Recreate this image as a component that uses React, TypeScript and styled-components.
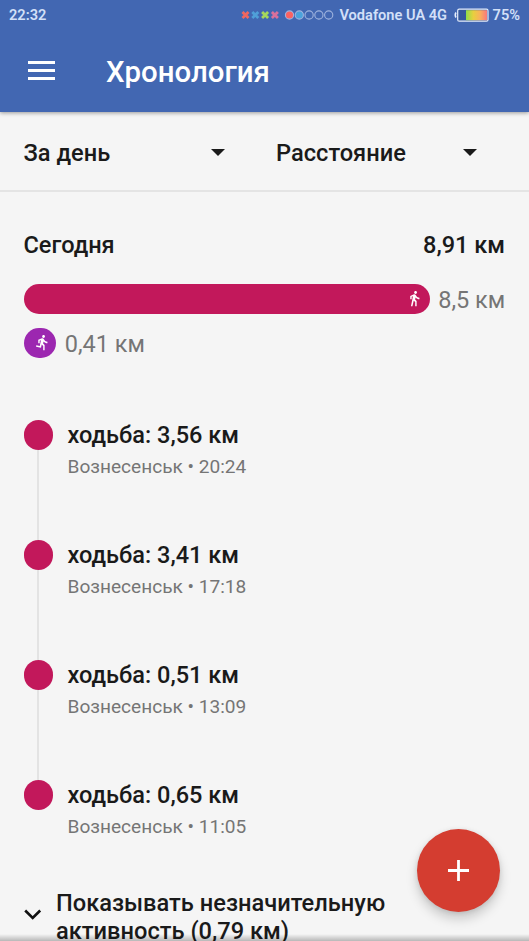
import React from "react";
import styled, { createGlobalStyle } from "styled-components";

const GlobalStyle = createGlobalStyle`
  * { box-sizing: border-box; }
  html, body { margin: 0; padding: 0; height: 100%; overflow: hidden; }
  body { background: #f5f5f5; font-family: Roboto, "Noto Sans", sans-serif; color: #1a1a1a; }
`;

const Screen = styled.div`
  position: relative;
  width: 529px;
  height: 941px;
  overflow: hidden;
  background: #f5f5f5;
`;

const Header = styled.header`
  height: 112px;
  background: #4267b2;
  box-shadow: 0 1px 4px rgba(0, 0, 0, 0.38);
`;

const StatusBar = styled.div`
  display: flex;
  align-items: center;
  height: 30px;
  padding: 0 9px;
  font-size: 14.6px;
  font-weight: 600;
  line-height: 30px;
  color: #d3e0f8;
  white-space: nowrap;
`;

const StatusRight = styled.div`
  display: flex;
  align-items: center;
  margin-left: auto;
`;

const Signals = styled.svg`
  display: block;
  margin-right: 5.5px;
`;

const Battery = styled.svg`
  display: block;
  margin: 0 4px 0 6.5px;
`;

const Toolbar = styled.div`
  display: flex;
  align-items: center;
  height: 82px;
  padding-left: 28px;
`;

const MenuButton = styled.button`
  display: flex;
  flex-direction: column;
  gap: 5px;
  width: 27px;
  margin: -1px 51px 0 0;
  padding: 0;
  border: 0;
  background: none;
`;

const MenuLine = styled.span`
  height: 3px;
  background: #fff;
`;

const Title = styled.h1`
  margin: 1px 0 0;
  font-size: 29.4px;
  font-weight: 500;
  line-height: 40px;
  color: #fff;
`;

const Filters = styled.div`
  display: grid;
  grid-template-columns: 252.5px 1fr;
  height: 80px;
  padding: 0 24px 0 23.5px;
  border-bottom: 2px solid #e4e4e4;
`;

const Filter = styled.div<{ $gap: string }>`
  display: flex;
  align-items: center;
  justify-content: space-between;
  padding: 3px ${(p) => p.$gap} 0 0;
  font-size: 23.65px;
  font-weight: 500;
`;

const SummaryHead = styled.div`
  display: flex;
  justify-content: space-between;
  margin-top: 38px;
  padding: 0 24px 0 23.5px;
  font-size: 23.55px;
  font-weight: 500;
  line-height: 30px;
`;

const Bars = styled.div`
  display: flex;
  flex-direction: column;
  gap: 14px;
  padding: 24px 0 0 23.5px;
`;

const BarRow = styled.div`
  display: flex;
  align-items: center;
  gap: 9px;
  height: 30px;
  font-size: 23.5px;
  line-height: 30px;
  color: #757575;
`;

const Bar = styled.div<{ $width: number; $color: string; $inset: number }>`
  display: flex;
  align-items: center;
  justify-content: flex-end;
  width: ${(p) => p.$width}px;
  height: 29.5px;
  padding: 0 ${(p) => p.$inset}px 1px 0;
  border-radius: 15px;
  background: ${(p) => p.$color};
`;

const BarLabel = styled.span`
  padding-top: 2px;
  margin-left: -0.3px;
`;

const Timeline = styled.div`
  padding: 62px 0 0 23.5px;
`;

const Entry = styled.div`
  display: flex;
  gap: 14.5px;
  height: 120px;
`;

const Rail = styled.div`
  display: flex;
  flex-direction: column;
  align-items: center;
  width: 29.5px;
`;

const Dot = styled.span`
  flex: none;
  width: 29.5px;
  height: 29.5px;
  border-radius: 50%;
  background: #c2185b;
`;

const RailLine = styled.span`
  flex: 1;
  width: 2px;
  background: #e3e3e3;
`;

const EntryText = styled.div`
  display: flex;
  flex-direction: column;
`;

const EntryTitle = styled.div`
  font-size: 23.55px;
  font-weight: 500;
  line-height: 30px;
`;

const EntryMeta = styled.div`
  margin-top: 4px;
  font-size: 19.08px;
  line-height: 26px;
  color: #757575;
`;

const More = styled.div`
  display: flex;
  align-items: flex-start;
  padding: 0 0 0 23.5px;
  margin-top: -11px;
  font-size: 23.65px;
  font-weight: 500;
  line-height: 28px;
`;

const MoreIcon = styled.svg`
  flex: none;
  margin: 20px 14.5px 0 0;
`;

const Fab = styled.button`
  position: absolute;
  left: 417px;
  top: 829px;
  display: flex;
  align-items: center;
  justify-content: center;
  width: 83px;
  height: 83px;
  padding: 0;
  border: 0;
  border-radius: 50%;
  background: #d43d30;
  box-shadow: 0 7px 12px rgba(0, 0, 0, 0.18), 0 1px 5px rgba(0, 0, 0, 0.1);
`;

const BottomShade = styled.div`
  position: absolute;
  left: 0;
  right: 0;
  bottom: 0;
  height: 7px;
  background: linear-gradient(rgba(0, 0, 0, 0), rgba(0, 0, 0, 0.25));
`;

const crosses = ["#f0675f", "#4f9fd8", "#a5d85c", "#d9709c"];
const rings = ["#fb6262", "#4ba3dc", "none", "none", "none"];

const entries = [
  { distance: "3,56", time: "20:24" },
  { distance: "3,41", time: "17:18" },
  { distance: "0,51", time: "13:09" },
  { distance: "0,65", time: "11:05" },
];

const Caret = () => (
  <svg width="14" height="7" viewBox="0 0 14 7">
    <path d="M0 0h14L7 7z" fill="#1a1a1a" />
  </svg>
);

const WalkIcon = () => (
  <svg width="17" height="17" viewBox="0 0 24 24" fill="#fff">
    <path d="M13.5 5.5c1.1 0 2-.9 2-2s-.9-2-2-2-2 .9-2 2 .9 2 2 2zM9.8 8.9L7 23h2.1l1.8-8 2.1 2v6h2v-7.5l-2.1-2 .6-3C14.8 12 16.8 13 19 13v-2c-1.9 0-3.5-1-4.3-2.4l-1-1.6c-.4-.6-1-1-1.7-1-.3 0-.5.1-.8.1L6 8.3V13h2V9.6l1.8-.7" />
  </svg>
);

const RunIcon = () => (
  <svg width="17" height="17" viewBox="0 0 24 24" fill="#fff">
    <path d="M13.49 5.48c1.1 0 2-.9 2-2s-.9-2-2-2-2 .9-2 2 .9 2 2 2zm-3.6 13.9l1-4.4 2.1 2v6h2v-7.5l-2.1-2 .6-3c1.3 1.5 3.3 2.5 5.5 2.5v-2c-1.9 0-3.5-1-4.3-2.4l-1-1.6c-.4-.6-1-1-1.7-1-.3 0-.5.1-.8.1l-5.2 2.2v4.7h2v-3.4l1.8-.7-1.6 8.1-4.9-1-.4 2 7 1.4z" />
  </svg>
);

export default function App() {
  return (
    <Screen>
      <GlobalStyle />
      <Header>
        <StatusBar>
          <span>22:32</span>
          <StatusRight>
            <Signals width="94" height="12" viewBox="0 0 94 12">
              {crosses.map((color, i) => (
                <path
                  key={color}
                  d={`M${2.5 + i * 9.8} 3l6 6m0-6l-6 6`}
                  stroke={color}
                  strokeWidth="2.8"
                />
              ))}
              {rings.map((fill, i) => (
                <circle
                  key={i}
                  cx={49.5 + i * 9.8}
                  cy="6"
                  r="4.1"
                  fill={fill}
                  stroke="#9fb3de"
                  strokeWidth="1.1"
                />
              ))}
            </Signals>
            <span>Vodafone UA 4G</span>
            <Battery width="35" height="14" viewBox="0 0 35 14">
              <defs>
                <linearGradient id="charge">
                  <stop offset="0" stopColor="#8fe04a" />
                  <stop offset="0.35" stopColor="#e8cf3e" />
                  <stop offset="0.65" stopColor="#f8b35a" />
                  <stop offset="1" stopColor="#f8787c" />
                </linearGradient>
              </defs>
              <path d="M2 4.5Q.5 7 2 9.5" fill="none" stroke="#e6eefc" strokeWidth="1.6" />
              <rect x="3.7" y="1.2" width="30.3" height="12" rx="1.5" fill="#36599c" stroke="#e6eefc" strokeWidth="1.2" />
              <rect x="12" y="2.2" width="21" height="10" fill="url(#charge)" />
            </Battery>
            <span>75%</span>
          </StatusRight>
        </StatusBar>
        <Toolbar>
          <MenuButton aria-label="Меню">
            <MenuLine />
            <MenuLine />
            <MenuLine />
          </MenuButton>
          <Title>Хронология</Title>
        </Toolbar>
      </Header>
      <Filters>
        <Filter $gap="51.5px">
          <span>За день</span>
          <Caret />
        </Filter>
        <Filter $gap="28px">
          <span>Расстояние</span>
          <Caret />
        </Filter>
      </Filters>
      <SummaryHead>
        <span>Сегодня</span>
        <span>8,91 км</span>
      </SummaryHead>
      <Bars>
        <BarRow>
          <Bar $width={406} $color="#c2185b" $inset={7}>
            <WalkIcon />
          </Bar>
          <BarLabel>8,5 км</BarLabel>
        </BarRow>
        <BarRow>
          <Bar $width={32.5} $color="#9c27b0" $inset={5}>
            <RunIcon />
          </Bar>
          <BarLabel>0,41 км</BarLabel>
        </BarRow>
      </Bars>
      <Timeline>
        {entries.map(({ distance, time }, i) => (
          <Entry key={time}>
            <Rail>
              <Dot />
              {i < entries.length - 1 && <RailLine />}
            </Rail>
            <EntryText>
              <EntryTitle>ходьба: {distance} км</EntryTitle>
              <EntryMeta>Вознесенськ • {time}</EntryMeta>
            </EntryText>
          </Entry>
        ))}
      </Timeline>
      <More>
        <MoreIcon width="18" height="12" viewBox="0 0 18 12">
          <path d="M1.2 1.5l7.5 7.5 7.5-7.5" fill="none" stroke="#111" strokeWidth="2.6" />
        </MoreIcon>
        <span>
          Показывать незначительную
          <br />
          активность (0,79 км)
        </span>
      </More>
      <BottomShade />
      <Fab aria-label="Добавить">
        <svg width="21" height="21" viewBox="0 0 21 21">
          <path d="M10.5 0v21M0 10.5h21" stroke="#fff" strokeWidth="2.8" />
        </svg>
      </Fab>
    </Screen>
  );
}
